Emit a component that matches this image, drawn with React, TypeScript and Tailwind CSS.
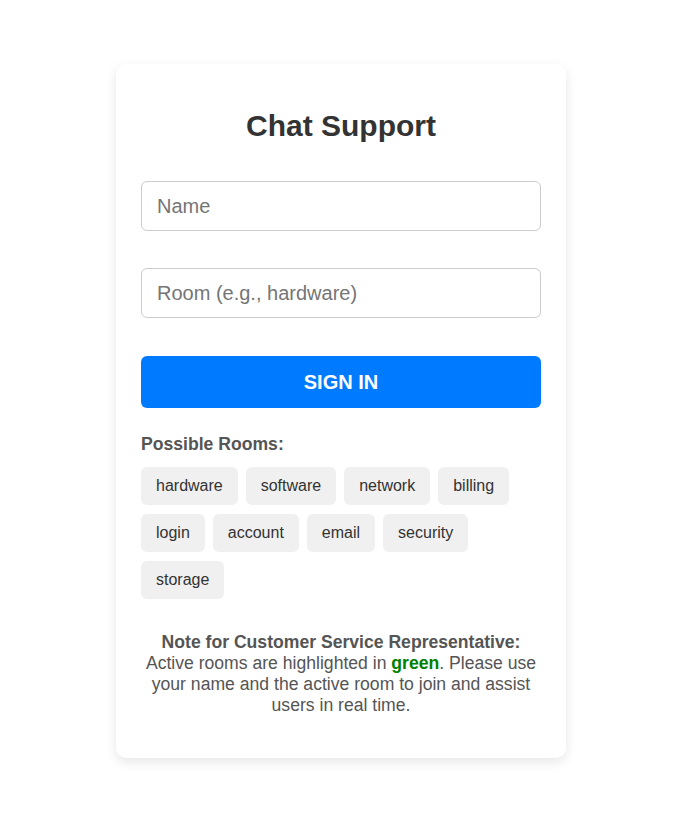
const rooms = [
  "hardware",
  "software",
  "network",
  "billing",
  "login",
  "account",
  "email",
  "security",
  "storage",
];

export default function App() {
  return (
    <div className="min-h-[816px] bg-white pr-[14px] pt-[64px] font-['Liberation_Sans',Arial,sans-serif]">
      <div className="mx-auto w-[450px] rounded-[10px] bg-white px-[25px] pt-[25px] pb-[42px] shadow-[0_4px_12px_rgba(0,0,0,0.1)]">
        {/* Titre */}
        <h2 className="mt-[20px] text-center text-[30px] font-bold leading-[34px] text-[#333]">
          Chat Support
        </h2>

        {/* Formulaire */}
        <input
          type="text"
          placeholder="Name"
          className="mt-[38px] block h-[50px] w-full rounded-[6px] border border-[#ccc] px-[15px] text-[20px] text-[#333] outline-none placeholder:text-[#757575]"
        />
        <input
          type="text"
          placeholder="Room (e.g., hardware)"
          className="mt-[37px] block h-[50px] w-full rounded-[6px] border border-[#ccc] px-[15px] text-[20px] text-[#333] outline-none placeholder:text-[#757575]"
        />
        <button className="mt-[38px] block h-[52px] w-full rounded-[6px] bg-[#007bff] text-[20px] font-bold text-white">
          SIGN IN
        </button>

        {/* Salles possibles */}
        <div className="mt-[26px] text-[17.6px] font-bold leading-[20px] text-[#555]">
          Possible Rooms:
        </div>
        <div className="mt-[13px] flex flex-wrap gap-x-[8px] gap-y-[9px]">
          {rooms.map((room) => (
            <span
              key={room}
              className="rounded-[6px] bg-[#f0f0f0] px-[15px] py-[10px] text-[16px] leading-[18px] text-[#333]"
            >
              {room}
            </span>
          ))}
        </div>

        {/* Note */}
        <p className="mt-[33px] text-center text-[17.6px] leading-[21px] text-[#555]">
          <strong>Note for Customer Service Representative:</strong>
          <br />
          Active rooms are highlighted in{" "}
          <strong className="text-[#008000]">green</strong>. Please use your
          name and the active room to join and assist users in real time.
        </p>
      </div>
    </div>
  );
}
